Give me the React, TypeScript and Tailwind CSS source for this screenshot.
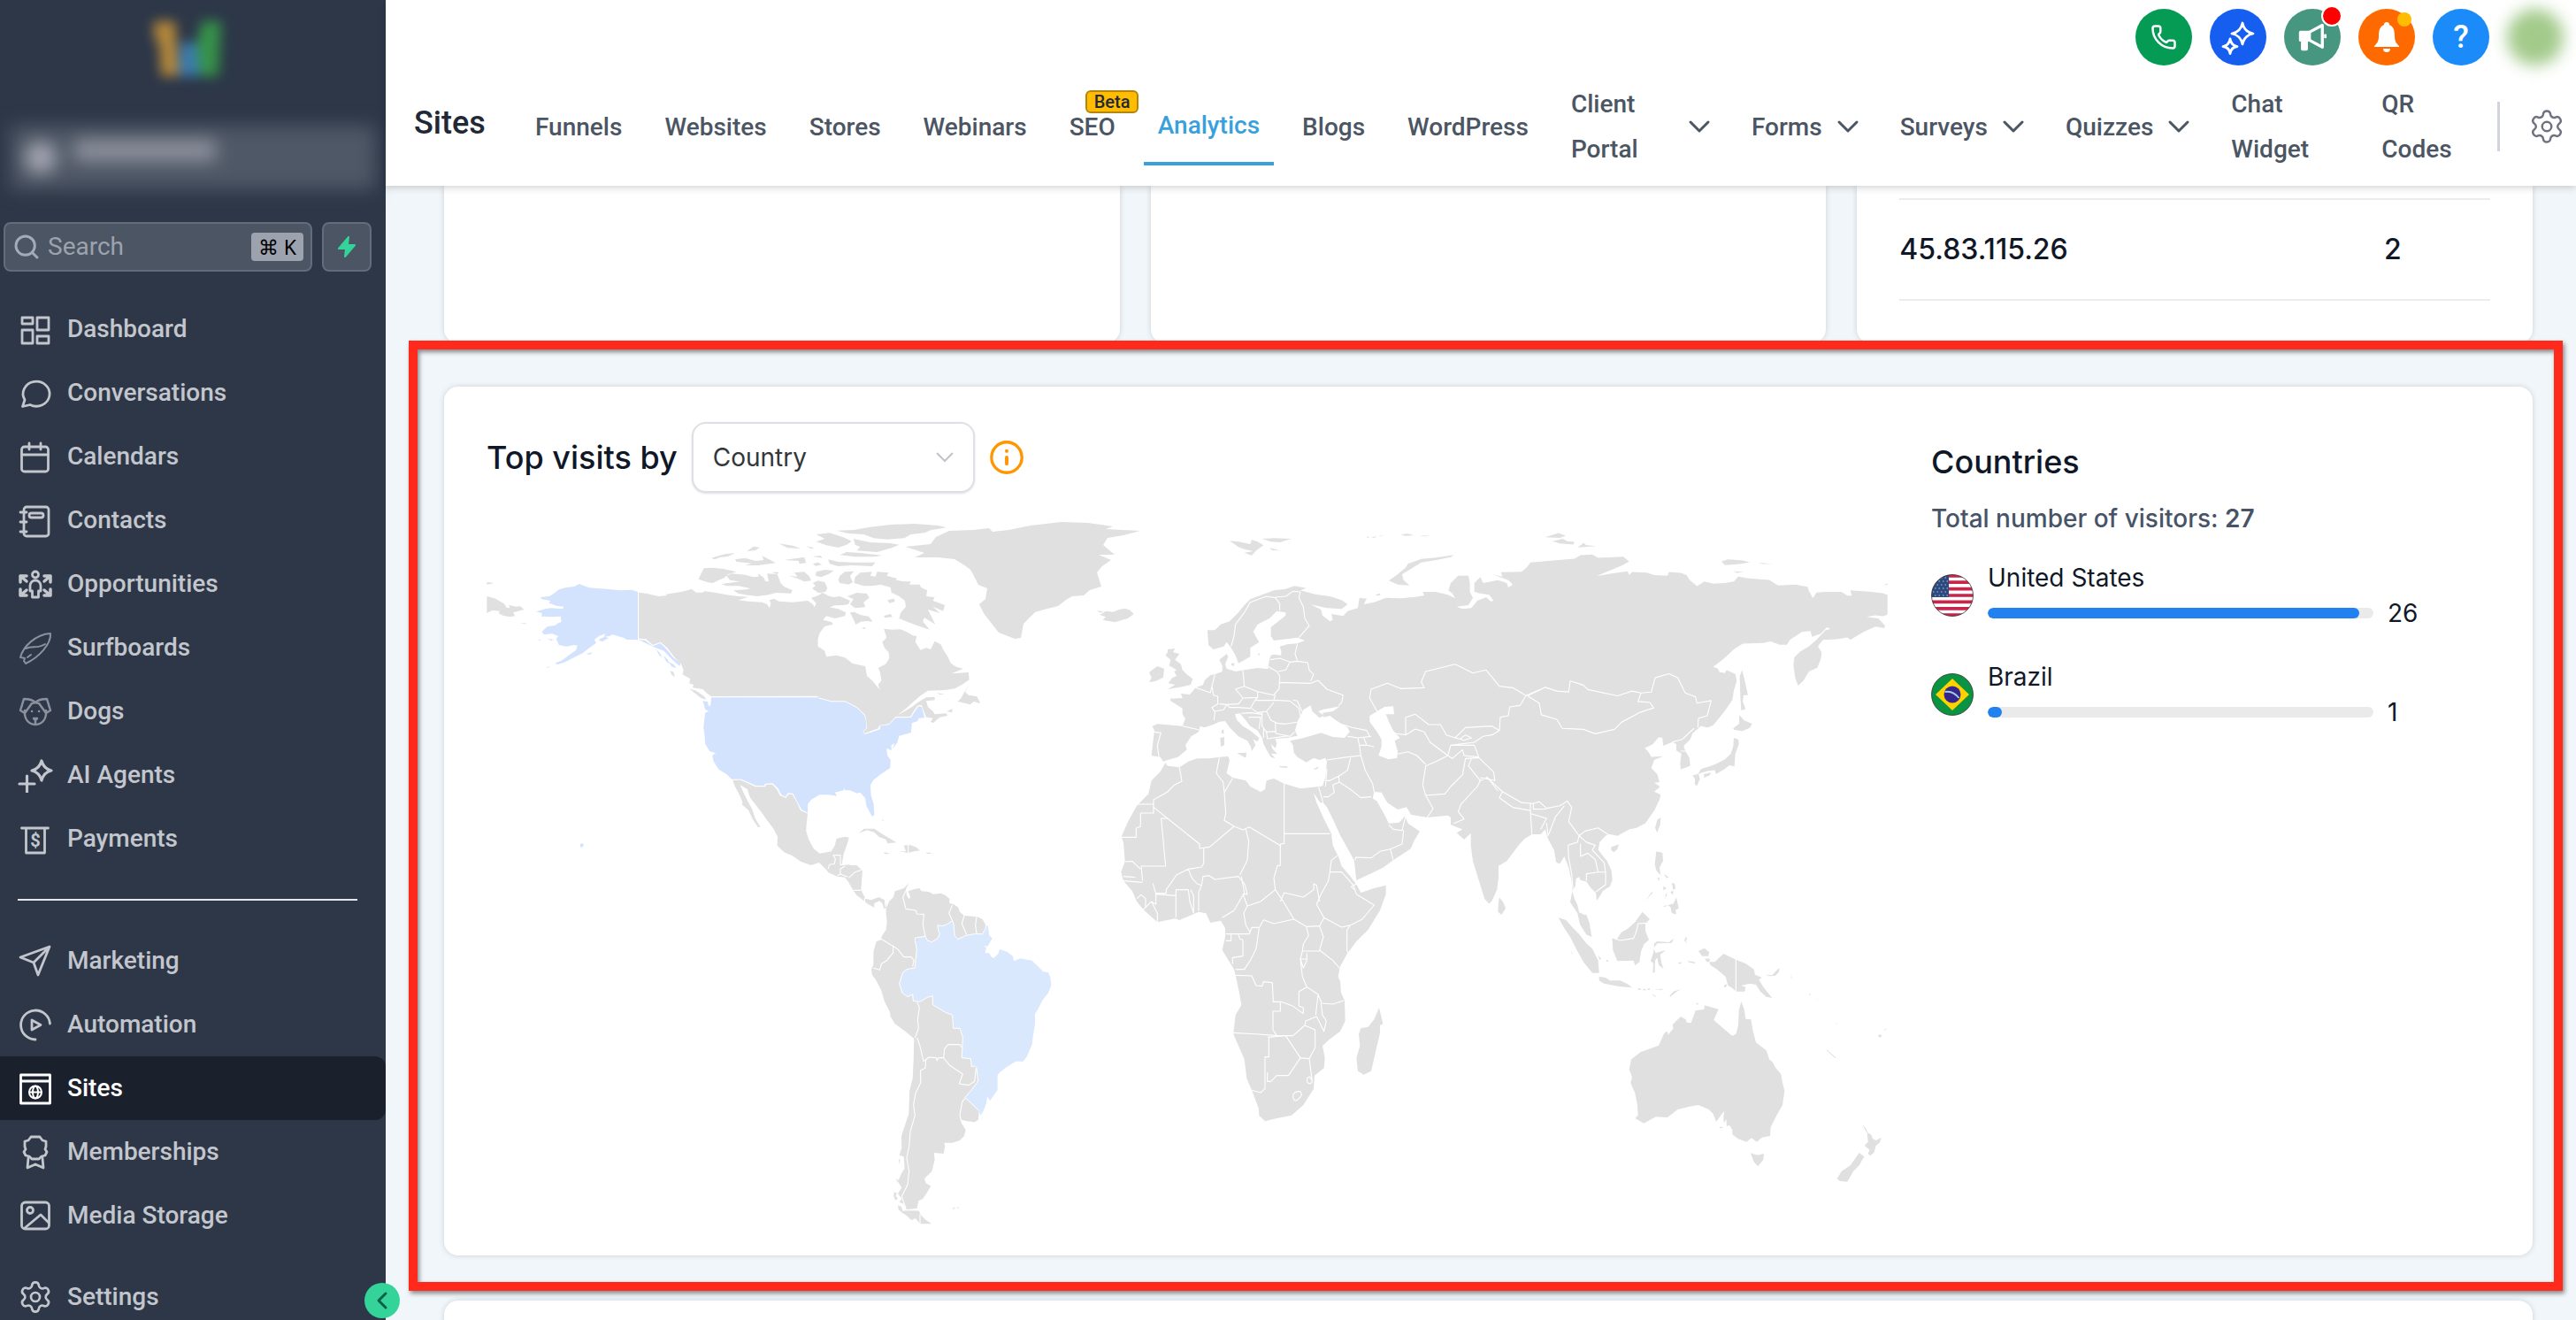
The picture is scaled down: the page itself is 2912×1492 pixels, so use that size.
import type { ReactNode } from 'react'
import { ChevronDown, ChevronLeft, Phone, Search, Settings } from 'lucide-react'

interface NavItem {
  label: string
  icon: ReactNode
  active?: boolean
  muted?: boolean
}

interface TabItem {
  label: string
  active?: boolean
  badge?: string
  menu?: boolean
  width?: string
}

interface CountryStat {
  name: string
  visits: number
  flag: ReactNode
}

const MAIN_NAV: NavItem[] = [
  {
    label: 'Dashboard',
    icon: (
      <>
        <rect x="5" y="7" width="12" height="7" />
        <rect x="22" y="7" width="13" height="14" />
        <rect x="5" y="21" width="12" height="15" />
        <rect x="22" y="28" width="13" height="8" />
      </>
    ),
  },
  {
    label: 'Conversations',
    icon: <path d="M5.5 35.5 8 28A15 14 0 1 1 14 33.5Z" />,
  },
  {
    label: 'Calendars',
    icon: (
      <>
        <rect x="4.5" y="9" width="30" height="28" rx="3" />
        <path d="M4.5 18h30M13 5v7M26 5v7" />
      </>
    ),
  },
  {
    label: 'Contacts',
    icon: (
      <>
        <rect x="7" y="5" width="28" height="33" rx="3" />
        <rect x="13" y="12" width="16" height="5" rx="2.5" />
        <path d="M3 11h7M3 22h7M3 33h7" />
      </>
    ),
  },
  {
    label: 'Opportunities',
    icon: (
      <>
        <circle cx="20" cy="9.500" r="3.500" />
        <path d="M14 28v-6a6 6 0 0 1 12 0v6h-2.500v7h-7v-7z" />
        <path
          d="M3 18v-7h7M3 11l7 6M37 18v-7h-7M37 11l-7 6M3 26v7h7M3 33l7-6M37 26v7h-7M37 33l-7-6"
          strokeWidth="3.500"
        />
      </>
    ),
  },
  {
    label: 'Surfboards',
    muted: true,
    icon: (
      <>
        <path d="M3 31C6 19 20 5 37 4c1 12-13 27-28 34l-2-3 1-3z" strokeWidth="2" />
        <path d="M9 21c8-4 13 1 22-5M11 31l4-3" strokeWidth="2" />
      </>
    ),
  },
  {
    label: 'Dogs',
    muted: true,
    icon: (
      <>
        <path d="M8 19c-1 9 4 16 12 16s13-7 12-16" strokeWidth="2.500" />
        <path d="M20 10c-3-3-7-4-13-4L3 19l5 3 8-11c3-1 5-1 8 0l8 11 5-3-4-13c-6 0-10 1-13 4z" strokeWidth="2.500" />
        <path d="M16 20h.1M24 20h.1M18 28h4l-2 2zM20 29v4" strokeWidth="2.500" />
      </>
    ),
  },
  {
    label: 'AI Agents',
    icon: (
      <path
        d="M10.500 21v18M2 30h17M27 4q2.500 9 11 11-8.500 2-11 11-2.500-9-11-11 8.500-2 11-11z"
        strokeWidth="3.200"
      />
    ),
  },
  {
    label: 'Payments',
    icon: (
      <>
        <path d="M4.500 8h30M9.500 8v28h21V8" />
        <text x="20" y="29" textAnchor="middle" fontSize="20" fontWeight="700" fill="currentColor" stroke="none">
          $
        </text>
      </>
    ),
  },
]

const MORE_NAV: NavItem[] = [
  {
    label: 'Marketing',
    icon: <path d="M36 4 3 16l15 6 5 14zM36 4 18 22" />,
  },
  {
    label: 'Automation',
    icon: <path d="M20 37A16.500 16.500 0 1 1 36.500 19M16 15v11l10-5.500z" />,
  },
  {
    label: 'Sites',
    active: true,
    icon: (
      <>
        <path d="M3.500 5h33v32h-33zM3.500 12h33" />
        <circle cx="20" cy="24.500" r="7" strokeWidth="2" />
        <ellipse cx="20" cy="24.500" rx="3" ry="7" strokeWidth="2" />
        <path d="M13 24.500h14" strokeWidth="2" />
      </>
    ),
  },
  {
    label: 'Memberships',
    icon: (
      <>
        <path d="M15 3h10l3 4 4 1v6l-1 3 2 3-2 4-4 1-3 3h-8l-3-3-4-1-2-4 2-3-1-3V8l4-1z" />
        <path d="m12 27-1 11 9-4 9 4-1-11" />
      </>
    ),
  },
  {
    label: 'Media Storage',
    icon: (
      <>
        <rect x="4.500" y="5" width="31" height="30" rx="4" />
        <circle cx="14" cy="14" r="3.500" />
        <path d="m8 34 18-15 9 9" />
      </>
    ),
  },
]

const TABS: TabItem[] = [
  { label: 'Funnels' },
  { label: 'Websites' },
  { label: 'Stores' },
  { label: 'Webinars' },
  { label: 'SEO', badge: 'Beta' },
  { label: 'Analytics', active: true },
  { label: 'Blogs' },
  { label: 'WordPress' },
  { label: 'Client Portal', menu: true, width: 'w-[116px]' },
  { label: 'Forms', menu: true },
  { label: 'Surveys', menu: true },
  { label: 'Quizzes', menu: true },
  { label: 'Chat Widget', width: 'w-[122px]' },
  { label: 'QR Codes', width: 'w-[98px]' },
]

function UsFlag() {
  return (
    <svg viewBox="0 0 48 48" className="size-12 shrink-0" aria-hidden="true">
      <clipPath id="us-clip">
        <circle cx="24" cy="24" r="23.500" />
      </clipPath>
      <g clipPath="url(#us-clip)">
        <path fill="#fff" d="M0 0h48v48H0z" />
        <path
          stroke="#c8254b"
          strokeWidth="3.700"
          d="M0 1.800h48M0 9.200h48M0 16.600h48M0 24h48M0 31.400h48M0 38.800h48M0 46.200h48"
        />
        <path fill="#2c4a80" d="M0 0h20v26H0z" />
        <path stroke="#b9c6de" strokeWidth="1.200" strokeDasharray="1.500 3" d="M2 4h18M4 8h16M2 12h18M4 16h16M2 20h18M4 24h16" />
      </g>
      <circle cx="24" cy="24" r="23.500" fill="none" stroke="#333" strokeWidth="0.800" />
    </svg>
  )
}

function BrazilFlag() {
  return (
    <svg viewBox="0 0 48 48" className="size-12 shrink-0" aria-hidden="true">
      <circle cx="24" cy="24" r="23.500" fill="#0a9441" stroke="#333" strokeWidth="0.800" />
      <path fill="#ffd200" d="m24 6 19 18-19 18L5 24z" />
      <circle cx="24" cy="24" r="9.500" fill="#36268a" />
      <path d="M15.500 21q9-2 16 7" fill="none" stroke="#9fd0ea" strokeWidth="2" />
    </svg>
  )
}

const COUNTRIES: CountryStat[] = [
  { name: 'United States', visits: 26, flag: <UsFlag /> },
  { name: 'Brazil', visits: 1, flag: <BrazilFlag /> },
]

const TOTAL_VISITS = COUNTRIES.reduce((sum, country) => sum + country.visits, 0)

function NavLink({ item }: { item: NavItem }) {
  return (
    <a
      href="#"
      className={`flex h-[72px] items-center gap-4 rounded-r-xl pl-5 text-[28px] font-medium ${
        item.active ? 'bg-[#1a202c] text-white' : 'text-[#c3c6cc]'
      }`}
    >
      <svg
        viewBox="0 0 40 40"
        className={`size-10 shrink-0 ${item.muted ? 'text-[#8a919d]' : ''}`}
        fill="none"
        stroke="currentColor"
        strokeWidth="2.800"
        strokeLinejoin="round"
        strokeLinecap="round"
        aria-hidden="true"
      >
        {item.icon}
      </svg>
      {item.label}
    </a>
  )
}

function Sidebar() {
  return (
    <aside className="relative flex w-[436px] shrink-0 flex-col bg-[#2d3748]">
      <svg
        viewBox="0 0 100 90"
        className="mx-auto mt-4 h-[90px] w-[100px] shrink-0 overflow-visible blur-[7px]"
        aria-hidden="true"
      >
        <path fill="#b5883a" d="M6 8h24l4 62H14L12 34 6 26z" />
        <path fill="#3b7bb0" d="M36 32h18l6 38H34z" />
        <path fill="#36924a" d="M60 8h22l-3 62H58l-4-34z" />
      </svg>
      <div className="mx-3 mt-9 flex h-[72px] shrink-0 items-center gap-5 bg-[#4f5866] pl-4 blur-[10px]">
        <div className="size-9 rounded-full bg-[#a5a7b2]" />
        <div className="h-6 w-40 -translate-y-2 bg-[#8f929e]" />
      </div>
      <div className="mt-[37px] flex shrink-0 gap-[11px] pl-1">
        <div className="flex h-14 w-[349px] items-center gap-3 rounded-lg border-2 border-[#626c7a] bg-[#4b5563] px-2">
          <Search className="size-8 shrink-0 text-[#a3abb8]" strokeWidth={2.2} />
          <input
            type="search"
            aria-label="Search"
            placeholder="Search"
            className="-ml-1 w-0 flex-1 bg-transparent text-[28px] text-white outline-none placeholder:text-[#9ca3af]"
          />
          <kbd className="rounded bg-[#9ca3af] px-2 font-sans text-[23px] leading-8 text-black">⌘ K</kbd>
        </div>
        <button
          type="button"
          aria-label="Quick actions"
          className="flex size-14 items-center justify-center rounded-lg border-2 border-[#626c7a] bg-[#4b5563]"
        >
          <svg viewBox="0 0 24 24" className="size-6" fill="#34d399" stroke="#34d399" strokeWidth="2" strokeLinejoin="round">
            <path d="M14 1 3 14h8l-1 9L21 10h-8z" />
          </svg>
        </button>
      </div>
      <nav className="mt-[29px] shrink-0">
        {MAIN_NAV.map((item) => (
          <NavLink key={item.label} item={item} />
        ))}
        <hr className="my-8 ml-5 w-96 border-t-2 border-[#e5e7eb]" />
        {MORE_NAV.map((item) => (
          <NavLink key={item.label} item={item} />
        ))}
        <a href="#" className="mt-5 flex h-[72px] items-center gap-4 pl-5 text-[28px] font-medium text-[#c3c6cc]">
          <Settings className="size-10" strokeWidth={1.6} />
          Settings
        </a>
      </nav>
      <button
        type="button"
        aria-label="Collapse menu"
        className="absolute -right-4 bottom-[2px] flex size-10 items-center justify-center rounded-full bg-[#34d399] text-[#065f46]"
      >
        <ChevronLeft className="size-8" strokeWidth={2.2} />
      </button>
    </aside>
  )
}

function TopActions() {
  const circle = 'relative flex size-16 items-center justify-center rounded-full text-white'
  return (
    <div className="flex h-[84px] items-center justify-end gap-5 pr-[14px]">
      <button type="button" aria-label="Call" className={`${circle} bg-[#059b55]`}>
        <Phone className="size-[30px]" strokeWidth={2} />
      </button>
      <button type="button" aria-label="Assistant" className={`${circle} bg-[#155eef]`}>
        <svg viewBox="0 0 40 40" className="size-10" fill="none" stroke="currentColor" strokeWidth="2.800" strokeLinejoin="round">
          <path d="M25 4q2 10 12 12-10 2-12 12-2-10-12-12 10-2 12-12zM11 22q1 7 8 8.500-7 1-8 8-1-7-8-8 7-1.500 8-8.500z" />
        </svg>
      </button>
      <button type="button" aria-label="Announcements" className={`${circle} bg-[#47967f]`}>
        <svg viewBox="0 0 32 32" className="size-9" fill="none" stroke="currentColor" strokeWidth="3" strokeLinejoin="round">
          <path d="M13 11 26 4v22l-13-7" />
          <path fill="currentColor" d="M4 11h9v8H4zM6 19h4v9H6z" />
          <path d="M29 13v4" strokeWidth="2.500" />
        </svg>
        <span className="absolute -top-1 -right-0.5 size-6 rounded-full border-2 border-white bg-[#ff0000]" />
      </button>
      <button type="button" aria-label="Notifications" className={`${circle} bg-[#ff6a00]`}>
        <svg viewBox="0 0 32 36" className="h-9 w-8" fill="currentColor">
          <path d="M16 1a3 3 0 0 1 3 3c5 2 6 7 6 13 0 6 2 8 5 11v1H2v-1c3-3 5-5 5-11C7 11 8 6 13 4a3 3 0 0 1 3-3zM12 31h8a4 4 0 0 1-8 0z" />
        </svg>
        <span className="absolute top-1 right-1 size-4 rounded-full bg-[#ffbc00]" />
      </button>
      <button type="button" aria-label="Help" className={`${circle} bg-[#1a8bf8] text-[36px] font-medium`}>
        ?
      </button>
      <div className="size-16 rounded-full bg-[#a3ca8b] blur-[9px]" />
    </div>
  )
}

function Tab({ tab }: { tab: TabItem }) {
  return (
    <a
      href="#"
      className={`relative flex items-center gap-[18px] px-4 text-[28px] leading-[51px] font-medium ${
        tab.active ? 'h-[88px] border-b-4 border-[#38a0db] text-[#38a0db]' : 'text-[#4b5563]'
      }`}
    >
      <span className={tab.width}>{tab.label}</span>
      {tab.menu && <ChevronDown className="-mx-[9px] size-10" strokeWidth={1.8} />}
      {tab.badge && (
        <span className="absolute -top-4 left-[34px] rounded-md border-2 border-[#b5850b] bg-[#ffbc00] px-2 text-[20px] leading-[22px] text-[#1f2937]">
          {tab.badge}
        </span>
      )}
    </a>
  )
}

function Header() {
  return (
    <header className="relative z-10 h-[210px] bg-white shadow-[0_2px_8px_rgba(0,0,0,0.18)]">
      <TopActions />
      <div className="flex h-[118px] items-center pl-8">
        <h1 className="w-[121px] pb-2 text-[36px] font-medium text-[#1f2937]">Sites</h1>
        <nav className="flex flex-1 items-center gap-4">
          {TABS.map((tab) => (
            <Tab key={tab.label} tab={tab} />
          ))}
        </nav>
        <div className="h-14 w-[3px] bg-[#d1d5db]" />
        <button type="button" aria-label="Site settings" className="mr-3 ml-8 text-[#6b7280]">
          <Settings className="size-[42px]" strokeWidth={1.4} />
        </button>
      </div>
    </header>
  )
}

function WorldMap() {
  return (
    <svg viewBox="550 588 1585 800" className="mt-[30px] w-full" role="img" aria-label="Visits by country">
      <g fill="#e0e0e0">
        {/* Greenland */}
        <path d="M1023 619 1052 616 1058 608 1073 601 1100 600 1118 598 1122 602 1140 600 1165 595 1200 591 1230 592 1258 596 1250 599 1289 601 1270 606 1252 609 1247 617 1260 628 1242 628 1256 634 1246 641 1240 648 1245 664 1232 668 1225 674 1212 675 1205 679 1196 686 1180 690 1170 693 1164 699 1157 706 1154 722 1147 723 1129 716 1118 702 1112 694 1107 684 1114 678 1116 666 1106 662 1101 652 1097 645 1092 641 1079 633 1060 631 1034 631 1045 626 1030 621Z" />

        {/* North America */}
        <g transform="translate(540 560) scale(0.38265 0.33333)">
          <path d="M27 345 50 352 78 370 85 383 95 385 92 375 115 380 125 378 137 390 120 395 105 400 110 412 95 415 75 410 62 403 65 395 45 392 30 400 27 403ZM27 298h10l10 3-20 4Z" />
          <path d="M476 332 500 336 535 345 560 342 555 338 590 332 610 328 632 320 645 332 665 332 670 328 700 332 735 340 770 345 800 347 770 358 800 362 840 365 855 372 862 385 866 370 862 358 875 353 890 362 930 365 975 360 990 372 995 382 1000 368 985 350 1000 345 1010 340 1018 332 1035 343 1050 348 1070 345 1090 355 1100 360 1095 372 1080 375 1055 376 1040 382 1065 388 1088 400 1085 412 1055 420 1030 412 1020 425 1045 432 1050 440 1025 447 1010 470 1005 490 1005 515 1015 522 1025 530 1030 550 1060 545 1085 553 1108 573 1145 582 1150 615 1165 630 1188 662 1183 645 1193 630 1188 600 1183 588 1205 575 1216 555 1214 535 1202 520 1195 500 1208 485 1200 455 1225 458 1250 457 1270 467 1285 478 1297 480 1293 500 1308 527 1325 520 1338 525 1350 497 1368 508 1375 525 1388 548 1398 572 1415 585 1435 590 1400 607 1450 603 1452 628 1430 645 1410 658 1380 663 1330 665 1310 680 1290 700 1265 726 1238 750 1280 722 1300 705 1325 688 1350 686 1350 697 1325 700 1330 720 1345 735 1350 745 1385 742 1388 750 1365 755 1345 775 1338 770 1345 758 1325 755 1318 735 1312 714 1300 715 1288 735 1278 753 1235 753 1215 778 1188 782 1183 793 1155 805 1143 810 1140 803 1150 793 1148 770 1145 748 1120 720 1085 700 1045 700 1005 688 1003 683 690 684 675 672 665 660 635 655 638 645 625 640 628 625 605 610 608 595 600 572 580 550 560 520 540 500 517 510 497 490 476 488Z" />
          <path d="M668 250 695 248 725 252 765 262 740 270 728 283 712 290 695 300 680 298 652 287ZM735 275 750 268 790 272 815 280 830 278 828 268 845 282 850 295 860 295 855 268 885 270 895 300 905 312 930 325 925 335 880 333 860 340 825 345 790 340 770 335 755 325 795 322 805 318 770 310 735 310 720 303 775 295 745 290ZM920 275 945 278 935 265 965 262 980 278 985 292 965 295 945 285ZM868 263h22l-5 7ZM1000 262 1025 255 1052 258 1040 268 1015 280 998 275ZM990 300l15-8 20 5 8 20-5 12-20 5-20-15 10-10ZM1070 275 1085 262 1112 260 1100 275 1108 298 1095 305 1070 300 1065 290Z" />
          <path d="M1112 300 1115 280 1130 265 1165 262 1160 275 1175 278 1180 262 1215 265 1208 275 1240 285 1235 290 1260 295 1280 295 1275 305 1305 305 1310 315 1328 325 1325 345 1350 348 1345 360 1380 375 1375 395 1345 380 1365 402 1330 390 1352 440 1320 418 1315 430 1335 458 1300 445 1270 432 1245 420 1250 400 1265 380 1262 360 1245 345 1222 332 1220 315 1190 305 1165 310 1140 310ZM1100 400l12-2 18 10 25 5 12 18-20-2-15 2-15 10-8-20ZM1092 345 1120 333 1150 336 1157 350 1140 365 1145 382 1115 385 1100 372 1110 355ZM1210 358l20-5 2 10-15 5ZM1200 411l20-6 5 10-22 3ZM1135 452l12-3-5 8Z" />
          <path d="M1035 220 1065 228 1115 230 1175 230 1165 243 1105 240 1065 243 1040 235ZM1060 122 1110 120 1160 110 1220 102 1290 99 1360 105 1385 112 1340 120 1320 130 1280 135 1260 148 1210 152 1170 148 1140 135 1095 132ZM1110 150 1160 162 1220 165 1245 170 1225 180 1180 195 1120 190 1130 178 1115 170ZM1000 135 1040 130 1080 145 1105 158 1090 170 1065 180 1030 172 1000 160 1025 150ZM1070 205 1090 195 1130 198 1195 206 1175 211 1115 211ZM690 215 730 202 760 198 740 210 715 213 700 220ZM760 220 790 215 820 225 845 222 840 208 870 225 880 232 830 240 790 240 810 233 765 228ZM890 166 930 173 955 183 915 181ZM795 192 815 176 833 179 821 189ZM905 222 965 212 970 232 950 235 948 225ZM988 210 1013 207 1018 215ZM990 235 1005 230 1017 238 999 242ZM970 175l25 6-10 3Z" />
          <path d="M1450 645 1440 670 1450 680 1475 685 1485 708 1465 702 1455 712 1418 702 1428 690ZM1355 672l25 6h-15ZM1385 735l18-8-2 12ZM625 658 645 665 670 685 675 695 660 690 640 672ZM568 598l10 3 5 18-10-8Z" />
          <path d="M753 968 777 968 820 991 850 991 852 983 870 983 883 998 893 1020 910 1029 919 1016 930 1017 943 1043 953 1070 975 1082 972 1110 970 1140 978 1170 992 1200 1010 1217 1045 1210 1055 1190 1060 1167 1085 1160 1097 1163 1090 1190 1083 1212 1078 1230 1075 1257 1100 1255 1100 1285 1040 1285 1035 1272 1010 1247 985 1257 955 1245 930 1225 905 1213 885 1190 886 1160 875 1135 855 1105 840 1080 820 1050 805 1028 797 1000 775 984 785 1010 800 1045 810 1065 820 1098 835 1128 828 1128 812 1100 800 1070 780 1050 783 1045 770 1010 760 990Z" />
        </g>

        {/* Central and South America */}
        <g transform="translate(900 900) scale(0.33333)">
          <path d="M75 225 110 200 160 200 155 237 205 237 225 255 220 320 235 350 255 355 280 345 300 355 308 380 298 385 292 366 282 358 265 366 265 380 245 370 230 358 205 338 195 325 175 290 165 278 140 275 110 262 100 250ZM213 128 230 113 265 113 290 130 310 142 340 160 310 163 305 150 280 140 265 125 240 118ZM350 190 372 190 365 170 385 168 405 175 420 187 400 190 380 195ZM442 194h15v4h-15ZM297 193l15 2 3 4-15-1ZM292 80l5 3-2 7Z" />
          <path d="M305 385 315 360 330 345 335 325 350 320 365 315 382 298 372 318 375 340 383 352 387 345 380 325 400 318 418 315 425 325 450 327 465 335 490 332 505 338 520 350 520 365 535 370 550 380 555 395 570 408 600 410 615 412 632 420 642 438 640 600 620 1070 618 1100 605 1108 580 1105 560 1100 560 1110 575 1135 570 1155 555 1170 530 1178 502 1178 505 1190 500 1215 467 1212 470 1235 460 1275 435 1300 440 1315 457 1325 445 1345 430 1368 415 1375 410 1400 375 1405 365 1385 350 1380 358 1368 345 1350 358 1330 345 1310 358 1280 368 1265 365 1225 350 1220 358 1195 357 1155 370 1115 382 1080 383 1040 385 1000 395 960 398 900 400 825 370 800 335 775 320 750 318 735 300 700 288 660 270 625 258 610 255 590 262 575 262 530 272 495 288 490 290 478 305 455 308 430 305 405Z" />
          <path d="M370 1408 415 1408 425 1425 440 1440 460 1453 420 1453 405 1435 390 1440 375 1425 355 1412ZM348 1232l5 5-3 15ZM340 1300l8 5-6 6ZM332 1345l10 5-5 8 8 8-8 8-6-15ZM345 1390l12 5 8 25-18-15ZM530 1400l10-4-5 8ZM545 1398l10-2-8 6Z" />
        </g>

        {/* Europe and western Asia */}
        <g transform="translate(1240 560) scale(0.33333)">
          <path d="M10 408 30 395 55 398 75 390 95 386 112 392 125 405 105 420 60 433 20 425 30 415ZM0 393l22 4-10 4ZM240 525 265 522 258 535 280 540 265 560 285 575 290 595 305 610 325 625 318 645 290 652 240 660 265 645 242 640 255 622 270 615 262 600 270 595 245 580 250 560 232 545 240 535ZM180 600 205 582 228 590 225 620 200 632 178 637 185 620 178 605ZM455 572h12l-3 10-8-3ZM418 825l14-3v28l-12 5ZM424 797h6v14l-8-2ZM475 877l32-2-2 18ZM618 920l28 2v5l-25-2ZM735 930l18-8-5 8-10 2ZM545 542l8-6-3 10ZM945 340l15-5 2 6-14 2Z" />
          <path d="M450 157 480 160 520 168 525 153 545 160 565 172 540 190 525 207 500 197 530 192 500 185 480 178ZM560 150 600 148 660 150 620 162 590 160ZM585 180l35 10-25-1ZM1210 205 1200 212 1150 222 1100 230 1060 255 1035 270 1040 290 1060 308 1020 305 990 292 1020 270 1045 250 1055 235 1100 218 1150 214ZM915 142l10 3-8 2ZM930 145l20-4-10 6ZM955 140l20-2-15 4ZM1030 135l25-2 20 5-30 2ZM1095 138l35 2-20 2Z" />
          <path d="M375 460 400 460 420 440 450 430 480 400 500 375 520 355 560 340 600 325 640 320 670 310 710 317 690 325 740 338 790 345 830 358 850 372 830 388 780 385 725 373 760 390 765 410 790 430 800 425 795 405 835 412 850 395 885 385 890 350 915 353 905 372 940 365 980 350 1030 352 1080 347 1110 342 1105 330 1150 330 1190 340 1215 352 1205 335 1192 325 1200 300 1225 275 1260 275 1265 300 1265 330 1275 350 1260 375 1220 380 1240 388 1270 385 1290 360 1320 348 1335 362 1345 360 1330 340 1300 335 1280 330 1280 300 1300 280 1310 300 1360 290 1390 300 1395 315 1410 305 1395 290 1340 270 1375 278 1370 263 1440 262 1460 245 1500 230 1500 1146 1200 1095 1190 1088 1120 1095 1065 1085 1050 1060 1020 1068 985 1045 965 1010 940 1008 935 1030 950 1040 975 1085 990 1115 1025 1112 1045 1090 1055 1115 1095 1142 1075 1175 1065 1200 1035 1220 1005 1240 970 1265 930 1285 880 1308 872 1240 850 1200 825 1155 800 1100 780 1060 767 1045 757 1045 752 992 765 988 775 960 780 905 775 893 755 900 735 893 710 908 680 890 668 875 665 850 655 835 690 828 725 818 760 808 800 822 840 825 857 805 850 790 810 765 790 750 770 755 765 740 800 735 825 718 770 728 750 735 770 750 755 757 730 735 725 715 700 730 680 770 672 800 680 818 645 825 605 828 610 845 605 860 590 845 595 862 612 880 590 878 605 895 590 890 575 865 565 845 560 825 545 800 520 785 500 760 485 742 468 745 475 765 495 785 520 800 550 825 545 838 530 830 538 850 525 870 522 855 510 835 480 820 450 790 435 768 415 770 395 780 365 790 350 785 345 805 320 820 300 850 305 865 275 890 240 900 225 905 215 890 185 885 190 840 195 800 188 785 205 778 290 785 300 760 290 745 290 725 250 700 248 692 290 690 285 675 315 678 335 655 360 645 365 630 385 612 400 610 425 600 425 580 415 560 440 540 445 550 435 575 440 590 470 600 500 595 545 588 580 592 585 560 590 545 600 542 625 545 625 530 620 515 645 508 680 505 705 495 680 485 600 495 590 480 590 450 640 410 640 400 610 395 585 420 545 440 530 465 550 500 520 520 520 550 480 572 470 545 455 520 440 500 430 515 395 525 378 510Z" />
          <path
            fill="#fff"
            d="M975 720 1005 718 1008 745 980 745 990 770 1005 800 1028 825 1010 835 1020 870 1018 893 990 898 955 885 965 855 965 830 950 805 925 770 925 750 950 735Z"
          />
        </g>

        {/* Africa */}
        <g transform="translate(1240 820) scale(0.33333)">
          <path d="M232 130 240 140 280 145 310 125 340 115 380 115 415 110 445 108 450 120 440 165 460 180 505 190 520 210 555 228 570 220 575 190 600 183 635 200 690 217 755 210 765 235 757 265 735 232 745 265 770 320 795 370 800 410 820 450 830 480 860 515 882 545 895 570 940 555 980 545 980 575 960 630 920 695 880 735 850 775 825 820 818 855 825 870 828 910 840 935 842 1005 825 1040 785 1070 765 1090 773 1130 770 1165 738 1190 735 1235 700 1290 660 1325 610 1335 570 1345 550 1325 548 1300 525 1240 508 1200 500 1135 463 1050 470 985 490 950 482 905 470 850 465 830 425 765 435 720 435 690 420 665 385 672 370 640 345 635 280 663 265 658 205 670 160 630 135 600 120 565 90 530 82 500 95 465 90 400 83 380 105 330 135 275 175 235 185 190 215 160ZM957 960 970 1015 960 1020 960 1045 945 1110 930 1175 905 1187 885 1175 880 1130 892 1090 888 1050 895 1030 920 1025 940 1000Z" />
        </g>

        {/* Asia */}
        <g transform="translate(1640 560) scale(0.33333 0.35714)">
          <path d="M250 240 270 215 330 210 420 203 440 192 480 190 500 200 585 197 605 212 580 225 540 240 495 258 545 250 600 243 605 255 615 245 665 247 690 255 735 257 740 245 780 248 800 255 810 270 835 290 860 275 890 282 930 280 960 275 975 260 1010 265 1080 270 1110 288 1170 285 1210 292 1215 305 1228 328 1240 310 1270 308 1325 308 1345 320 1360 320 1355 303 1420 307 1465 312 1481 318 1481 380 1465 385 1440 382 1410 387 1450 392 1473 415 1470 423 1440 418 1400 435 1355 460 1345 452 1310 458 1262 460 1245 480 1258 500 1255 520 1243 548 1215 560 1195 590 1178 605 1168 580 1162 540 1165 515 1185 497 1215 480 1240 460 1270 430 1288 425 1275 420 1255 440 1225 450 1220 432 1190 435 1150 460 1140 475 1115 475 1085 465 1060 470 990 472 960 490 925 520 890 545 905 550 912 562 930 565 935 555 965 568 970 590 960 620 955 650 925 690 890 730 870 738 848 732 840 740 820 755 812 775 790 795 795 810 810 835 812 858 780 870 778 850 782 820 765 810 765 790 752 783 720 795 718 770 705 768 685 790 658 802 670 815 680 830 720 828 690 840 680 865 700 885 708 910 690 912 710 925 690 940 712 950 708 965 690 1000 660 1040 630 1055 605 1060 565 1080 540 1075 525 1080 505 1100 500 1125 530 1160 545 1190 548 1220 540 1240 515 1255 510 1265 495 1285 492 1260 475 1245 460 1225 440 1220 435 1210 425 1215 422 1240 412 1255 420 1280 430 1300 435 1320 460 1330 470 1355 478 1400 460 1393 438 1360 430 1325 405 1290 412 1255 410 1225 400 1180 385 1145 370 1168 358 1165 350 1125 330 1090 320 1060 305 1075 275 1075 250 1090 230 1110 190 1160 162 1175 162 1210 157 1250 140 1285 130 1295 115 1280 95 1220 75 1160 68 1110 68 1072 45 1092 20 1070 40 1060 0 1045 0 400 220 400Z" />
          <path d="M320 135 365 122 390 130 370 137ZM345 148 380 140 395 148 420 150 415 158 370 155ZM430 168 450 153 460 160 495 163 460 165ZM918 212 940 205 985 208 1015 214 980 220 930 223ZM1040 215l50 5h-30ZM960 243l35 2-25 3ZM1467 287l14-6v4ZM988 555 995 580 1008 635 993 635 990 655 1000 678 985 683 982 640 980 575ZM978 697 995 715 1022 725 1015 738 990 748 960 745 958 740 978 725ZM960 770 975 775 977 790 965 820 962 860 945 857 930 868 900 885 895 872 870 875 845 882 835 888 850 868 885 858 905 850 930 838 950 820 958 795ZM858 885l25-5-5 8-18 8ZM820 888 840 885 845 900 835 922 828 918 828 900ZM712 1022 710 1045 700 1070 693 1055 700 1030ZM545 1115l25-8-5 15-12 10-10-8ZM165 1275 178 1290 186 1310 172 1330 160 1320 162 1290Z" />
          <path d="M697 1130 718 1133 720 1160 708 1180 712 1205 697 1190 692 1170ZM700 1212l8 2-2 10ZM722 1200l18 12-8 2ZM750 1228l10 5 2 15-8 2ZM720 1240l12 5-10 8ZM745 1258l10-5-2 15ZM730 1262l4 4-8 12ZM765 1275 773 1310 762 1315 765 1328 750 1325 745 1305 735 1300 755 1295ZM720 1305l14-8-6 8ZM682 1257l3 3-25 26Z" />
        </g>

        {/* South-east Asia and Oceania */}
        <g transform="translate(1740 980) scale(0.33333)">
          <path d="M65 175 90 182 115 210 135 230 160 262 180 280 200 320 203 362 180 362 150 325 125 280 105 240 85 210ZM203 375 225 378 240 388 275 388 300 400 315 412 270 408 220 398 203 388ZM247 242 262 250 278 225 300 212 325 190 350 155 375 180 360 195 360 220 372 250 355 265 345 290 340 325 325 337 320 320 265 322 250 285ZM390 262 400 255 440 258 456 245 450 260 400 262 388 278 395 295 410 290 430 285 410 300 415 330 422 348 405 335 400 310 393 320 392 360 385 362 387 330 378 322 388 290ZM335 415h10v4h-10ZM352 417h10v4h-10ZM368 415h8v4h-8ZM390 418l30-2-5 4ZM380 432l18 10h-8ZM442 440 455 425 480 417 460 430 445 443ZM500 322l25 2 5 6-20-3ZM472 326h10v5h-10ZM498 238l3 8-4 6 3 10-8-10ZM200 303l10 10-5 5ZM228 318h6v5h-6ZM90 243l6 8ZM108 288l6 8-3 2Z" />
          <path d="M540 288 560 278 577 292 573 305 552 305ZM562 315l14-2 4 8-10 5ZM577 325 595 325 625 297 667 317 700 330 728 350 732 368 755 378 745 385 760 410 790 447 770 443 750 425 735 402 715 398 685 405 700 410 697 425 668 425 650 410 640 405 632 375 605 352 580 335ZM625 408l8-8 4 4-6 8ZM768 368 790 370 808 350 815 345 812 360 800 372 780 373ZM850 367l10 18-4-3ZM915 432l8 5h-6ZM940 450l6 3h-4ZM1007 530l4 4-2 3ZM975 622 1007 650 1003 651 975 625ZM1148 576l8-6 6 5-6 6ZM1166 558l12-8-2 5Z" />
          <path d="M685 458 695 485 700 518 718 520 725 560 735 598 770 625 780 655 792 665 800 682 820 705 825 735 832 762 825 810 805 845 785 885 783 915 755 920 738 935 720 922 703 935 675 925 655 910 655 895 645 878 636 882 634 858 626 872 625 850 627 830 600 867 590 840 575 825 540 810 510 815 470 825 435 852 395 850 355 872 325 855 335 845 333 810 325 770 310 735 315 715 305 690 312 655 345 630 405 608 425 565 435 560 437 572 455 550 452 538 480 510 497 520 500 530 515 532 530 490 560 485 560 472 608 485 592 522 630 555 655 576 668 568 675 540 677 490ZM532 466l8-2-4 8ZM612 884h10v4h-10ZM717 973 740 980 762 975 760 995 742 1018 728 1003ZM1095 875 1108 890 1115 905 1125 910 1132 925 1142 930 1160 920 1155 937 1142 948 1135 972 1122 982 1115 975 1120 962 1103 947 1115 935 1112 905 1100 885ZM1085 972 1102 985 1085 1015 1065 1035 1045 1070 1020 1068 1010 1060 1025 1035 1055 1015Z" />
        </g>
      </g>

      {/* United States */}
      <g fill="#d4e3fd" transform="translate(540 560) scale(0.38265 0.33333)">
        <path d="M690 688 1003 688 1010 692 1045 703 1085 703 1120 723 1143 749 1147 770 1148 793 1138 803 1143 813 1160 807 1188 796 1190 784 1215 781 1235 757 1280 756 1290 738 1302 718 1312 719 1320 757 1303 758 1300 768 1283 775 1280 808 1245 818 1240 840 1225 865 1232 843 1222 850 1222 868 1208 860 1210 885 1220 900 1218 928 1195 945 1170 967 1160 985 1162 1020 1170 1050 1172 1085 1165 1092 1157 1075 1148 1055 1145 1030 1130 1010 1120 1013 1100 1003 1085 1003 1084 994 1082 1003 1055 1010 1062 1022 1035 1018 1010 1018 985 1035 975 1050 975 1079 957 1068 945 1043 932 1014 917 1012 909 1025 897 1018 887 996 871 979 849 980 847 987 822 987 779 965 750 965 735 948 712 932 697 905 693 885 703 877 685 870 672 845 670 810 667 790 672 740 682 735 672 728 665 700 680 702 682 718 688 715Z" />
        <path d="M473 330 455 323 420 325 380 320 330 316 300 303 285 312 262 315 240 322 225 335 212 345 185 348 190 355 215 360 210 368 235 378 255 380 250 388 215 385 200 388 172 397 190 402 188 413 215 415 245 413 247 432 235 437 230 443 205 448 190 465 195 475 220 472 238 480 232 490 240 510 262 515 285 510 295 512 290 528 265 548 250 562 228 572 235 576 255 570 285 552 310 538 330 520 350 503 345 492 358 480 378 472 372 482 390 480 398 475 430 485 440 492 473 493ZM474 492 495 494 517 514 540 504 558 524 578 553 600 570 597 582 575 560 550 530 520 517ZM528 525l12 15 5 15-10-12ZM548 545l14 15 5 14-10-8ZM565 568l14 8 8 12-14-4ZM360 490l15-8 12 4-18 12-10-2ZM320 540l20-5-8 8ZM178 492l10 1-6 3ZM205 488l20 4-8 4ZM200 588l15-6-6 5ZM125 435l16 1 4 4ZM303 1186l5-4 6 7-6 8-5-2Z" />
      </g>

      {/* Brazil */}
      <g fill="#dae8fe" stroke="#fff" transform="translate(900 900) scale(0.33333)">
        <path
          stroke="none"
          d="M403 493 415 495 413 483 438 478 445 492 460 497 470 490 480 485 488 468 482 460 480 440 495 443 510 438 530 425 535 440 537 475 548 488 575 475 605 470 632 470 642 452 645 440 650 442 655 475 665 485 650 510 640 530 630 535 655 535 660 545 670 552 685 538 690 522 715 530 735 545 738 562 760 553 800 560 820 580 838 598 855 600 863 620 865 645 855 670 835 695 820 725 810 740 810 775 803 820 800 845 783 885 770 902 745 902 715 920 690 940 683 948 683 1000 668 1020 658 1035 648 1022 645 1045 635 1070 625 1085 620 1070 600 1050 572 1025 590 1005 617 970 612 925 605 918 595 920 592 893 562 890 565 820 555 790 533 790 530 745 505 735 480 720 463 710 463 680 445 685 420 700 397 697 395 675 378 683 360 670 350 638 362 600 375 590 403 585 409 520Z"
        />
        <path
          fill="none"
          strokeWidth="3"
          d="M645 440 642 452 632 470 605 470 575 475 548 488 537 475 535 440 530 425 510 438 495 443 480 440 482 460 488 468 480 485 460 497 445 492 438 478 405 483 403 493 409 520 403 585 375 590 362 600 350 638 360 670 378 683 395 675 397 697 420 700 445 685 463 680 463 710 480 720 505 735 530 745 533 790 555 790 565 820 562 890 592 893 595 920 605 918 612 925 617 970 590 1005 572 1025 600 1050 620 1070M640 512l18 4 28 0-2 15-15 8-12-4-4-10z"
        />
      </g>

      {/* Borders */}
      <g fill="none" stroke="#fff" strokeWidth="3.300" strokeLinejoin="round">
        <path
          transform="translate(900 900) scale(0.33333)"
          d="M375 318 362 345 372 385 405 390 410 402 433 403 430 440 438 478M530 372 518 400 530 425M570 408 562 435 578 472M612 412 608 440 612 468M288 487 315 503 330 512 345 522 365 548 390 548 400 560 395 580M330 512 328 535 305 562 290 570 283 592 262 585M410 700 418 720 412 760 415 790 403 822M410 822 420 850 432 902 450 888 475 890 478 900 482 890 500 890 503 860 515 845 555 845 562 855M500 890 520 915 565 945 553 978 585 983 605 970 610 925M572 1028 563 1040 555 1085 560 1105M440 895 438 925 422 932 422 975 405 1010 398 1050 403 1085 387 1140 383 1190 375 1230 383 1275 378 1320 358 1360 372 1400M370 1406h45M420 1420v35M125 203 133 215 130 232 113 235 108 250M125 203h25v32h12M150 268V250l15-10M140 272l10-5 25 10M178 280 200 260 222 253M195 322h25M232 348v12M302 358v20M380 168v28"
        />
        <path
          transform="translate(1240 560) scale(0.33333)"
          d="M455 515 465 480 470 440 500 400 520 365 575 345 605 350 620 370 620 393M605 348 640 345 665 328 690 330 685 350 700 380 705 420 720 445 685 485M680 505 672 540 680 565 715 570 720 595 735 610 725 632M588 560 620 555 655 568 680 565M615 600 640 595 655 568M580 583 610 600 620 615 618 655M495 595 500 650 545 668 600 680 620 655M620 637 725 640 750 630 780 660 835 680 830 705 820 715M400 610 390 650 395 680 410 685 410 710 390 722 400 738 397 765M335 655 385 672 390 650M290 785 345 797M195 805 217 808 205 850 210 890M400 735 430 730 440 712 415 710M500 650 470 660 495 690 545 688 545 668M495 690 480 710 440 712 450 722 480 722 520 725 535 700 545 688M535 698 600 697 605 680M525 725 545 740 575 735 600 705M600 697 655 700 685 725 690 750M575 735 590 765 610 775 640 778 678 772M665 697 680 700 695 735M605 775 607 810 655 820 670 805M560 740 560 785 575 805 605 803M490 742 520 740 560 745M515 755 555 755 550 795M565 790 565 825M575 805 578 828 650 818M835 780 865 790 915 800 925 820M850 820 885 825 930 820M885 825 890 850 915 850 940 855M905 825 915 850M890 850 895 885M780 900 850 890 895 885M860 893 850 935 820 955 822 975 860 1000 895 1028 930 1025M895 885 910 935 935 980 940 1008M778 970 790 970 820 955M822 975 800 985 805 1010 785 1025 767 1025M780 930 775 990M752 992 767 1045M950 735 925 690 930 660 985 640 1030 658 1110 655 1100 635 1115 600 1215 575 1275 605 1320 595 1365 650 1410 655 1455 682 1500 662M1455 682 1435 715 1400 720 1395 750 1368 755 1365 800 1340 785 1300 787 1250 790 1215 825 1185 815 1165 780 1125 780 1080 745 1047 755V815M1010 810 1047 815 1080 795 1110 805 1130 840 1190 885 1200 850 1280 850 1295 890 1245 885 1240 865 1205 895 1190 885 1150 905 1115 920 1105 985 1115 1020 1180 1015 1200 990 1240 950 1250 895 1295 892 1345 940 1350 970 1300 960M1365 800 1340 815 1310 820 1280 840 1200 850M1215 825l30 8 25-8-20-10-20 15M1018 880 1055 872 1085 885 1115 915M1115 1020 1140 1065 1120 1095M1270 895 1260 920 1300 970 1290 990 1235 1050 1225 1075 1245 1100 1210 1115M1300 970l25-10 35 45"
        />
        <path
          transform="translate(1240 820) scale(0.33333)"
          d="M280 145 288 193 262 205 240 228 192 255 192 280M135 270h57M148 300h44v-20M83 382h50v-30l15-7v-45M192 280 348 405 348 420 382 415 465 345 495 357 517 347 622 410M415 112 405 165 428 195 432 230 437 300 432 325 465 345M460 182 432 230M635 200v203l-13 2v73M637 370h153M242 318h-24l15 162h-83l5 50M95 465 120 463 148 490M90 515 130 518M90 530 155 535M362 420v50l-7 13-45 7-40 20-35 50M310 490 322 520 340 540 355 545M355 545 360 515 380 512 400 525 480 515 500 540M505 355 515 395 510 460 485 510M622 478h-10l-12 42 5 40-50 40-45 15-15-40h15l-10-37M510 615 498 640 505 680 520 705M605 560 632 600 668 660M550 690 565 662 600 675 668 660M490 515 500 570 465 630 425 655M437 710h80l8-22h25M622 600 635 570 700 585 735 560 735 540 745 545 755 600M790 500 785 530 760 575 745 610 770 655M790 500 830 500 870 545 880 575 940 612 900 660 860 680 830 687 770 655M815 445 795 460 790 500M668 660 710 685 755 683 770 655M755 683 768 720 755 765 800 800 825 828M858 682l-10 15v68l4 10M710 685 718 715 700 745 697 768h58M697 768 690 795 700 825 712 800 712 775M690 795h20M690 795 697 855 712 890 750 915 762 945 800 948 838 935M712 890 685 905 685 955 700 960 700 980 665 955 625 940h-27l-3-65-30-3-5 15-20-2-15-33-55-2M550 690 540 760 520 800 500 830 470 830M455 710v23h-18M480 712l5 15 10 3v55l-35 5v22M622 940v32h-25v63l13 20M463 1045 550 1050 610 1055 640 1055M583 1060v67h-13v108l-15 13-30-8M580 1060l60-5 50 75-40 60-40 0-20 20h-12v-30M640 1055 665 1055 705 1020 740 1035 740 1095 720 1133 690 1130M720 1133 730 1210M705 1020 708 1005 745 990 770 1040 778 1005 765 985 760 945M750 915 742 985M268 655v-95h42l5 40 13 40M345 632 345 570 355 545M318 560l10 20v60M200 575 268 580M190 538 200 575 200 610 185 600 205 640 205 670M235 560v12h-35M135 590 150 577 165 590 165 620 155 630M185 600l-20 20M875 460 878 450 930 452 960 430 995 422 1005 460M995 422 1035 405 1040 360 1005 355 990 340M1035 358 1047 310M880 540l-18 10 15 12M690 1244q-24-2-25 16 0 14 10 16 18-12 19-22zM722 1194q-10 2-10 12t10 12q8-2 8-10z"
        />
        <path
          transform="translate(1640 560) scale(0.33333 0.35714)"
          d="M260 637 320 610 360 622 400 625 405 590 450 603 465 617 565 637 615 622 645 628 680 625 693 580 740 567 770 580 795 628 830 640 835 660 883 652 870 700 840 708 838 738M260 637 300 660 307 697 360 712 378 740 450 743 490 757 555 743 580 720 640 690 688 675 675 658 635 655 645 628M120 893 175 940 240 975 280 978 300 972 325 993 370 985 395 970 410 990 400 1035 435 1080 455 1065 500 1055 540 1080M175 940 165 960 210 990 270 1000V978M280 978v18l45-1M270 1002 275 1075M272 1010 325 1025 305 1060M385 985 355 1020 330 1080M325 1040l5 40M435 1080 430 1100 398 1110 400 1150 410 1200 415 1255M435 1080 460 1100 490 1110 480 1125 520 1165 525 1195M440 1105 440 1145 465 1135 490 1155 500 1195M460 1222 460 1200 500 1195 525 1195 525 1235 492 1257M752 783 785 775 825 740M780 812h20M435 1320l22 10"
        />
        <path transform="translate(1740 980) scale(0.33333)" d="M247 242 275 252 320 245 330 220 335 195 365 193M667 310v118" />
      </g>
    </svg>
  )
}

function CountryRow({ country }: { country: CountryStat }) {
  return (
    <li className="flex items-center gap-4">
      {country.flag}
      <div>
        <div className="text-[28px] leading-9">{country.name}</div>
        <div className="mt-1 flex items-center gap-4">
          <div className="h-3 w-[436px] overflow-hidden rounded-full bg-[#eaeaea]">
            <div
              className="h-full rounded-full bg-[#2281f1]"
              style={{ width: `${(country.visits / TOTAL_VISITS) * 100}%` }}
            />
          </div>
          <span className="text-[28px] leading-9">{country.visits}</span>
        </div>
      </div>
    </li>
  )
}

function TopVisitsCard() {
  return (
    <div className="flex gap-12 rounded-2xl bg-white px-12 pt-10 pb-8 shadow-[0_0_6px_rgba(16,24,40,0.16)]">
      <div className="min-w-0 flex-1">
        <div className="flex items-center gap-4">
          <label htmlFor="visits-by" className="text-[36px] font-medium">
            Top visits by
          </label>
          <div className="relative">
            <select
              id="visits-by"
              className="h-20 w-80 appearance-none rounded-2xl border-2 border-[#dfe0e6] bg-white pl-[22px] text-[28px] text-[#333639] shadow-sm"
            >
              <option>Country</option>
            </select>
            <svg
              viewBox="0 0 20 12"
              className="pointer-events-none absolute top-[34px] right-6 h-3 w-5"
              fill="none"
              stroke="#c2c2c8"
              strokeWidth="2"
            >
              <path d="m1 1 9 9 9-9" />
            </svg>
          </div>
          <svg viewBox="0 0 36 36" className="size-10" fill="none" stroke="#ff9500" strokeWidth="3" strokeLinecap="round">
            <circle cx="18" cy="18" r="15.500" />
            <path d="M18 18v6.500M18 11.500v.1" strokeWidth="3.500" />
          </svg>
        </div>
        <WorldMap />
      </div>
      <div className="w-[632px] pt-[23px]">
        <h2 className="text-[36px] leading-[44px] font-medium">Countries</h2>
        <p className="mt-6 text-[28px] leading-9 font-medium text-[#475467]">
          Total number of visitors: <b className="font-semibold">{TOTAL_VISITS}</b>
        </p>
        <ul className="mt-[31px] flex flex-col gap-9">
          {COUNTRIES.map((country) => (
            <CountryRow key={country.name} country={country} />
          ))}
        </ul>
      </div>
    </div>
  )
}

export default function App() {
  const card = 'rounded-b-2xl bg-white shadow-[0_0_6px_rgba(16,24,40,0.16)]'
  return (
    <div className="flex h-screen overflow-hidden bg-[#f1f6fa] font-[Roboto,sans-serif]">
      <Sidebar />
      <div className="flex min-w-0 flex-1 flex-col">
        <Header />
        <main className="flex-1 overflow-hidden pr-[49px] pl-[66px] font-[Inter,sans-serif] text-[#101828]">
          <div className="grid grid-cols-3 gap-[35px]">
            <div className={card} />
            <div className={card} />
            <div className={`${card} px-12 pt-[14px] pb-12`}>
              <table className="w-full text-left text-[32px] font-medium">
                <tbody>
                  <tr className="h-[114px] border-y-2 border-[#eaecf0]">
                    <td>45.83.115.26</td>
                    <td className="w-[120px]">2</td>
                  </tr>
                </tbody>
              </table>
            </div>
          </div>
          <section className="relative mt-[49px]">
            <TopVisitsCard />
            <div className="pointer-events-none absolute -top-[52px] -right-[34px] -bottom-10 -left-10 border-[10px] border-[#ff2a1c] shadow-[2px_3px_5px_rgba(0,0,0,0.45),inset_2px_3px_5px_rgba(0,0,0,0.45)]" />
          </section>
          <div className="mt-[51px] h-40 rounded-2xl bg-white shadow-[0_0_6px_rgba(16,24,40,0.16)]" />
        </main>
      </div>
    </div>
  )
}
